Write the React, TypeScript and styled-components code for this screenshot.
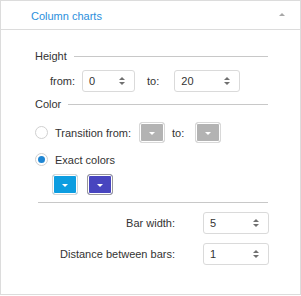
import styled, { createGlobalStyle } from 'styled-components';

const GlobalStyle = createGlobalStyle`
  html, body {
    margin: 0;
    padding: 0;
    background: #fff;
  }
  body {
    font-family: "Liberation Sans", Arial, sans-serif;
    font-size: 11px;
    color: #333;
  }
`;

const Panel = styled.div`
  box-sizing: border-box;
  width: 301px;
  height: 295px;
  border: 1px solid #dcdcdc;
  background: #fff;
`;

const Header = styled.div`
  height: 27px;
  display: flex;
  align-items: center;
  justify-content: space-between;
  padding: 1px 15px 0 30px;
  border-bottom: 1px solid #dcdcdc;
`;

const HeaderTitle = styled.span`
  color: #2b8fdc;
  font-size: 11px;
`;

const CollapseArrow = styled.span`
  width: 0;
  height: 0;
  margin-top: -2px;
  border-left: 3px solid transparent;
  border-right: 3px solid transparent;
  border-bottom: 3px solid #a8a8a8;
`;

const Body = styled.div`
  display: flex;
  flex-direction: column;
  padding: 19px 31px 0 34px;
`;

const GroupTitle = styled.div<{ $top?: number }>`
  display: flex;
  align-items: center;
  height: 14px;
  margin-top: ${(p) => p.$top ?? 0}px;
  color: #333;

  &::after {
    content: '';
    flex: 1;
    height: 1px;
    background: #c8c8c8;
    margin: 0 1px 0 7px;
  }
`;

const Row = styled.div<{ $top?: number; $left?: number }>`
  display: flex;
  align-items: center;
  height: 21px;
  margin-top: ${(p) => p.$top ?? 0}px;
  padding-left: ${(p) => p.$left ?? 0}px;
`;

const Label = styled.span<{ $gap?: number; $ml?: number }>`
  margin-right: ${(p) => p.$gap ?? 7}px;
  margin-left: ${(p) => p.$ml ?? 0}px;
  white-space: nowrap;
`;

const Spin = styled.div<{ $w: number }>`
  box-sizing: border-box;
  width: ${(p) => p.$w}px;
  height: 22px;
  display: flex;
  align-items: center;
  justify-content: space-between;
  border: 1px solid #dadada;
  border-radius: 3px;
  padding: 0 9px 0 6px;
  background: #fff;
  color: #333;
`;

const Arrows = styled.span`
  display: flex;
  flex-direction: column;
  gap: 2px;

  &::before,
  &::after {
    content: '';
    width: 0;
    height: 0;
    border-left: 3px solid transparent;
    border-right: 3px solid transparent;
  }
  &::before {
    border-bottom: 3px solid #707070;
  }
  &::after {
    border-top: 3px solid #707070;
  }
`;

const Radio = styled.span<{ $checked?: boolean }>`
  box-sizing: border-box;
  width: 13px;
  height: 13px;
  border-radius: 50%;
  border: 1px solid #d0d0d0;
  background: #fff;
  margin-right: 7px;
  display: flex;
  align-items: center;
  justify-content: center;

  &::after {
    content: '';
    display: ${(p) => (p.$checked ? 'block' : 'none')};
    width: 7px;
    height: 7px;
    border-radius: 50%;
    background: #1f86d3;
  }
`;

const ColorButton = styled.span<{ $fill: string; $ring: string }>`
  box-sizing: border-box;
  width: 26px;
  height: 21px;
  border: 1px solid ${(p) => p.$ring};
  border-radius: 3px;
  box-shadow: inset 0 0 0 1px #fff;
  background: ${(p) => p.$fill};
  display: flex;
  align-items: center;
  justify-content: center;
  padding-top: 2px;

  &::after {
    content: '';
    width: 0;
    height: 0;
    border-left: 3px solid transparent;
    border-right: 3px solid transparent;
    border-top: 3px solid #fff;
  }
`;

const Swatches = styled.div`
  display: flex;
  gap: 9px;
  margin-top: 4px;
  padding-left: 17px;
`;

const Divider = styled.div`
  height: 1px;
  background: #c8c8c8;
  margin: 7px 1px 0 3px;
`;

const FormGrid = styled.div`
  display: grid;
  grid-template-columns: 1fr 66px;
  column-gap: 27px;
  row-gap: 9px;
  align-items: center;
  margin-top: 9px;
`;

const GridLabel = styled.span`
  text-align: right;
  padding-right: 1px;
  white-space: nowrap;
`;

export default function App() {
  return (
    <>
      <GlobalStyle />
      <Panel>
        <Header>
          <HeaderTitle>Column charts</HeaderTitle>
          <CollapseArrow />
        </Header>
        <Body>
          <GroupTitle>Height</GroupTitle>
          <Row $top={7} $left={15}>
            <Label>from:</Label>
            <Spin $w={53}>
              <span>0</span>
              <Arrows />
            </Spin>
            <Label $ml={12} $gap={15}>to:</Label>
            <Spin $w={66}>
              <span>20</span>
              <Arrows />
            </Spin>
          </Row>

          <GroupTitle $top={6}>Color</GroupTitle>
          <Row $top={11}>
            <Radio />
            <Label $gap={8}>Transition from:</Label>
            <ColorButton $fill="#b3b3b3" $ring="#d8d8d8" />
            <Label $ml={7} $gap={11}>to:</Label>
            <ColorButton $fill="#b3b3b3" $ring="#d8d8d8" />
          </Row>
          <Row $top={6}>
            <Radio $checked />
            <Label>Exact colors</Label>
          </Row>
          <Swatches>
            <ColorButton $fill="#0d9de0" $ring="#d8d8d8" />
            <ColorButton $fill="#4845bf" $ring="#9a9a9a" />
          </Swatches>

          <Divider />

          <FormGrid>
            <GridLabel>Bar width:</GridLabel>
            <Spin $w={66}>
              <span>5</span>
              <Arrows />
            </Spin>
            <GridLabel>Distance between bars:</GridLabel>
            <Spin $w={66}>
              <span>1</span>
              <Arrows />
            </Spin>
          </FormGrid>
        </Body>
      </Panel>
    </>
  );
}
